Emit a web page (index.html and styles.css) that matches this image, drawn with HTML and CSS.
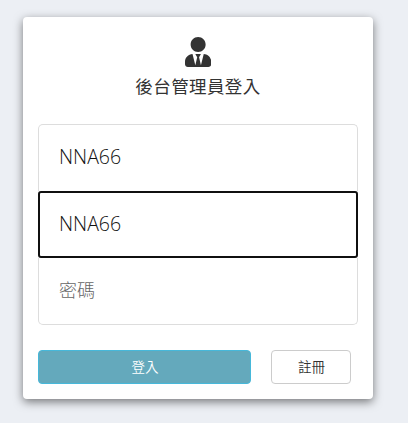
FILE: index.html
```html
<!DOCTYPE html>
<html lang="zh-Hant">
  <head>
    <meta charset="UTF-8" />
    <meta name="viewport" content="width=device-width, initial-scale=1.0" />
    <title>後台管理員登入</title>
    <link rel="stylesheet" href="styles.css">
  </head>
  <body>
    <div class="login-card">
      <div class="login-header">
        <svg class="user-icon" viewBox="0 0 448 512" aria-hidden="true">
          <path fill="currentColor" d="M224 256c70.7 0 128-57.3 128-128S294.7 0 224 0 96 57.3 96 128s57.3 128 128 128zm95.8 32.6L272 480l-32-136 32-56h-96l32 56-32 136-47.8-191.4C56.9 292 0 350.3 0 422.4V464c0 26.5 21.5 48 48 48h352c26.5 0 48-21.5 48-48v-41.6c0-72.1-56.9-130.4-128.2-133.8z" />
        </svg>
        <h1>後台管理員登入</h1>
      </div>

      <form id="loginForm">
        <div class="fields">
          <input type="text" name="company" value="NNA66" />
          <input type="text" name="account" class="active" value="NNA66" />
          <input type="password" name="password" placeholder="密碼" />
        </div>
        <div class="buttons">
          <button type="submit" class="btn btn-login">登入</button>
          <button type="button" class="btn btn-register">註冊</button>
        </div>
      </form>
    </div>
  </body>
</html>
```
FILE: styles.css
```css
* {
  box-sizing: border-box;
}

body {
  min-height: 100vh;
  margin: 0;
  padding: 17px 23px 0;
  background-color: #eceff4;
  color: #333;
  font-family: "Open Sans", "Noto Sans CJK TC", sans-serif;
}

.login-card {
  width: 350px;
  height: 382px;
  padding: 20px 15px 15px;
  background-color: white;
  border-radius: 4px;
  box-shadow: 0 3px 10px rgba(0, 0, 0, 0.5);
}

.login-header {
  height: 87px;
  text-align: center;
}

.user-icon {
  display: block;
  height: 30px;
  margin: 0 auto;
}

.login-header h1 {
  margin: 6px 0 0;
  font-size: 17.5px;
  font-weight: 400;
  letter-spacing: 0.4px;
  line-height: 26px;
}

.fields {
  display: flex;
  flex-direction: column;
}

.fields input {
  width: 100%;
  height: 67px;
  padding: 0 20px 3px;
  border: 1px solid #ddd;
  border-bottom: none;
  background-color: white;
  color: #111;
  font-family: inherit;
  font-size: 19.5px;
  font-weight: 300;
  outline: none;
}

.fields input:first-child {
  border-radius: 5px 5px 0 0;
}

.fields input:last-child {
  padding-bottom: 4px;
  border-top: none;
  border-bottom: 1px solid #ddd;
  border-radius: 0 0 5px 5px;
}

.fields input.active {
  padding: 0 19px 2px;
  border: 2px solid #101010;
  border-radius: 3px;
}

.fields input::placeholder {
  color: #666;
  font-size: 18px;
  opacity: 1;
}

.buttons {
  display: flex;
  gap: 20px;
  margin-top: 25px;
}

.btn {
  height: 34px;
  padding: 0 0 2px 1px;
  border-radius: 4px;
  font-family: inherit;
  font-size: 13.5px;
  font-weight: 350;
  cursor: pointer;
}

.btn-login {
  width: 213px;
  border: 1px solid #46b8da;
  background-color: #64a9bc;
  color: white;
}

.btn-register {
  width: 80px;
  border: 1px solid #ccc;
  background-color: white;
  color: #333;
}
```
